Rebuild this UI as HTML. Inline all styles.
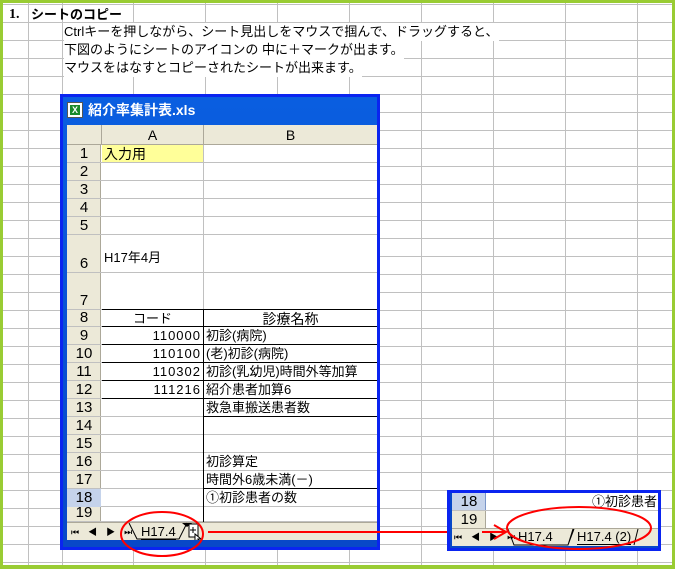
<!DOCTYPE html>
<html><head><meta charset="utf-8"><style>
*{margin:0;padding:0;box-sizing:border-box}
body{width:675px;height:569px;overflow:hidden;background:#fff;position:relative;font-family:"Liberation Sans","Noto Sans CJK JP",sans-serif;font-size:13px;color:#000}
.a{position:absolute}
.h{position:absolute;height:2px;background:#c0c0c0}
.v{position:absolute;width:2px;background:#c0c0c0}
.t{position:absolute;white-space:nowrap;line-height:18px}
.rh{position:absolute;left:0;width:34px;text-align:center;font-size:15px;color:#000}
</style></head><body>
<div id="g"></div>
<script>
var g=document.getElementById('g'),s='';
for(var y=4;y<569;y+=18)s+='<div class="h" style="left:0;top:'+y+'px;width:675px;height:1px"></div>';
[28,62,133,205,277,349,421,493,565,637].forEach(function(x){s+='<div class="v" style="left:'+x+'px;top:0;height:569px;width:1px"></div>'});
g.innerHTML=s;
</script>
<div class="a" style="left:0;top:0;width:675px;height:3px;background:#9c3"></div>
<div class="a" style="left:0;top:0;width:3px;height:569px;background:#9c3"></div>
<div class="a" style="left:672px;top:0;width:3px;height:569px;background:#9c3"></div>
<div class="a" style="left:0;top:565px;width:675px;height:4px;background:#9c3"></div>
<div class="t" style="left:9px;top:6px;font-weight:bold;font-family:'Liberation Serif','Noto Serif CJK SC',serif;font-size:14px">1.</div>
<div class="t" style="left:31px;top:6px;font-weight:bold;font-size:13px">シートのコピー</div>
<div class="t" style="left:64px;top:23px;font-size:13px;background:#fff">Ctrlキーを押しながら、シート見出しをマウスで掴んで、ドラッグすると、</div>
<div class="t" style="left:64px;top:41px;font-size:13px;background:#fff">下図のようにシートのアイコンの 中に＋マークが出ます。</div>
<div class="t" style="left:64px;top:59px;font-size:13px;background:#fff">マウスをはなすとコピーされたシートが出来ます。</div>

<div class="a" style="left:60px;top:94px;width:320px;height:456px;border:3px solid #0a24f0;background:linear-gradient(#0a5ee0,#0848c8);">
 <div class="a" style="left:4px;top:5px;width:16px;height:16px;background:#fff;border:1px solid #555"><div style="margin:2px;width:10px;height:10px;background:#1a8a2a;color:#fff;font-size:9px;line-height:10px;text-align:center;font-weight:bold">X</div></div>
 <div class="t" style="left:25px;top:3px;color:#fff;font-weight:bold;font-size:14px;line-height:20px">紹介率集計表.xls</div>
 <div class="a" style="left:4px;top:28px;width:310px;height:415px;background:#fff;overflow:hidden">
  <div class="a" style="left:0;top:0;width:310px;height:20px;background:#ece9d8;border-bottom:1px solid #aca899"></div>
  <div class="a" style="left:34px;top:0;width:1px;height:20px;background:#aca899"></div>
  <div class="a" style="left:136px;top:0;width:1px;height:20px;background:#aca899"></div>
  <div class="t" style="left:35px;top:1px;width:101px;text-align:center;font-size:14px">A</div>
  <div class="t" style="left:137px;top:1px;width:173px;text-align:center;font-size:14px">B</div>
  <div class="a" style="left:0;top:20px;width:34px;height:377px;background:#ece9d8;border-right:1px solid #aca899"></div>
  <div id="rows"></div>
  <div class="a" style="left:35px;top:20px;width:101px;height:17px;background:#ffff99"></div>
  <div class="t" style="left:37px;top:20px;font-size:14px">入力用</div>
  <div class="t" style="left:37px;top:124px;font-size:13px">H17年4月</div>
  <div class="t" style="left:35px;top:185px;width:101px;text-align:center">コード</div>
  <div class="t" style="left:137px;top:185px;width:173px;text-align:center;font-size:14px">診療名称</div>
  <div class="t" style="left:35px;top:202px;width:99px;text-align:right;letter-spacing:1px">110000</div>
  <div class="t" style="left:35px;top:220px;width:99px;text-align:right;letter-spacing:1px">110100</div>
  <div class="t" style="left:35px;top:238px;width:99px;text-align:right;letter-spacing:1px">110302</div>
  <div class="t" style="left:35px;top:256px;width:99px;text-align:right;letter-spacing:1px">111216</div>
  <div class="t" style="left:139px;top:202px">初診(病院)</div>
  <div class="t" style="left:139px;top:220px">(老)初診(病院)</div>
  <div class="t" style="left:139px;top:238px">初診(乳幼児)時間外等加算</div>
  <div class="t" style="left:139px;top:256px">紹介患者加算6</div>
  <div class="t" style="left:139px;top:274px">救急車搬送患者数</div>
  <div class="t" style="left:139px;top:328px">初診算定</div>
  <div class="t" style="left:139px;top:346px">時間外6歳未満(－)</div>
  <div class="t" style="left:139px;top:364px">①初診患者の数</div>
  <div class="a" style="left:0;top:397px;width:310px;height:18px;background:#ece9d8;border-top:1px solid #aca899"></div>
  <div class="t" style="left:4px;top:398px;font-size:9px;letter-spacing:9px">⏮◀▶⏭</div>
  <div class="t" style="left:74px;top:398px;font-size:13px"><span style="border-bottom:1px solid #000">H17.4</span></div>
  <svg class="a" style="left:60px;top:397px" width="80" height="20"><path d="M2 1 L10 17 L52 17 L60 1" fill="none" stroke="#000"/><path d="M55 1 l5 4 l5 -4z" fill="#000"/><rect x="62" y="2" width="9" height="13" fill="#fff" stroke="#000"/><path d="M66 5v6M63 8h6" stroke="#000"/><path d="M68 12 l0 8 l2 -2 l2 3 l1 -1 l-2 -3 l3 0z" fill="#fff" stroke="#000"/></svg>
 </div>
</div>
<svg class="a" style="left:119px;top:508px" width="90" height="56"><ellipse cx="43" cy="26" rx="41" ry="22" fill="none" stroke="#f00" stroke-width="2"/></svg>
<div class="a" style="left:208px;top:531px;width:290px;height:2px;background:#f00"></div>

<div class="a" style="left:447px;top:490px;width:214px;height:61px;border:3px solid #0a24f0;background:#0848c8;overflow:hidden">
 <div class="a" style="left:2px;top:0;width:207px;height:52px;background:#fff">
  <div class="a" style="left:0;top:0;width:34px;height:36px;background:#ece9d8;border-right:1px solid #aca899"></div>
  <div class="a" style="left:0;top:0;width:34px;height:17px;background:#c5d3eb;border-right:1px solid #7a96c8"></div>
  <div class="a" style="left:0;top:17px;width:207px;height:1px;background:#c0c0c0"></div>
  <div class="t" style="left:0;top:0;width:34px;text-align:center;font-size:15px">18</div>
  <div class="t" style="left:0;top:18px;width:34px;text-align:center;font-size:15px">19</div>
  <div class="t" style="left:140px;top:0">①初診患者の</div>
  <div class="a" style="left:0;top:35px;width:207px;height:18px;background:#ece9d8;border-top:1px solid #aca899"></div>
  <div class="t" style="left:2px;top:35px;font-size:9px;letter-spacing:9px">⏮◀▶⏭</div>
  <div class="t" style="left:66px;top:35px">H17.4</div>
  <div class="t" style="left:125px;top:35px"><span style="border-bottom:1px solid #000">H17.4 (2)</span></div>
  <svg class="a" style="left:54px;top:35px" width="150" height="18"><path d="M2 1 L8 17 L62 17 L67 1 M62 17 L68 1 M128 17 L132 1" fill="none" stroke="#000"/></svg>
 </div>
</div>
<svg class="a" style="left:505px;top:503px" width="150" height="50"><ellipse cx="74" cy="25" rx="72" ry="21" fill="none" stroke="#f00" stroke-width="2"/></svg>
<svg class="a" style="left:480px;top:522px" width="30" height="20"><path d="M2 10 H26 M14 3 L26 10 L14 17" fill="none" stroke="#f00" stroke-width="2"/></svg>

<script>
var r=document.getElementById('rows'),o='';
var tops=[20,38,56,74,92,110,148,185,202,220,238,256,274,292,310,328,346,364,382];
for(var i=0;i<tops.length;i++){var t=tops[i],b=tops[i+1]||397;
 o+='<div class="a" style="left:0;top:'+(b-1)+'px;width:310px;height:1px;background:#c0c0c0"></div>';
 o+='<div class="rh" style="top:'+(b-18)+'px;line-height:18px;'+(i==17?'background:#c5d3eb;':'')+'">'+(i+1)+'</div>';}
o+='<div class="a" style="left:136px;top:20px;width:1px;height:377px;background:#c0c0c0"></div>';
[184,201,219,237,255,273].forEach(function(y){o+='<div class="a" style="left:35px;top:'+y+'px;width:275px;height:1px;background:#000"></div>'});
o+='<div class="a" style="left:137px;top:291px;width:173px;height:1px;background:#000"></div>';
o+='<div class="a" style="left:137px;top:363px;width:173px;height:1px;background:#000"></div>';
o+='<div class="a" style="left:136px;top:184px;width:1px;height:213px;background:#000"></div>';
r.innerHTML=o;
</script>
</body></html>
